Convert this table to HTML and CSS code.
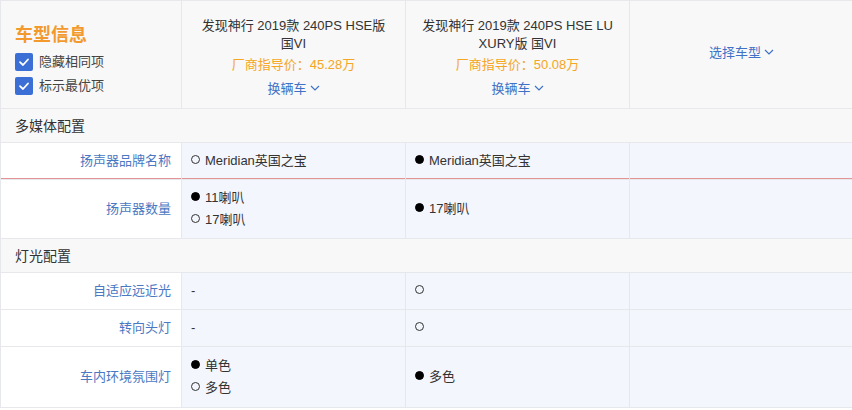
FILE: index.html
```html
<!DOCTYPE html>
<html lang="zh-CN">
<head>
    <meta charset="UTF-8">
    <title>车型对比 - 参数配置</title>
    <link rel="stylesheet" href="styles.css">
</head>
<body>

<table class="compare">
    <colgroup>
        <col class="col-label">
        <col class="col-car">
        <col class="col-car">
        <col class="col-car">
    </colgroup>

    <!-- 头部：车型信息 -->
    <tr class="head-row">
        <td class="head-info">
            <h2>车型信息</h2>
            <label class="check"><span class="box"><svg viewBox="0 0 18 18" width="18" height="18"><path d="M5 9.2 L8 12 L13 6.5" fill="none" stroke="#fff" stroke-width="1.8" stroke-linecap="round" stroke-linejoin="round"/></svg></span>隐藏相同项</label>
            <label class="check"><span class="box"><svg viewBox="0 0 18 18" width="18" height="18"><path d="M5 9.2 L8 12 L13 6.5" fill="none" stroke="#fff" stroke-width="1.8" stroke-linecap="round" stroke-linejoin="round"/></svg></span>标示最优项</label>
        </td>
        <td class="head-car">
            <div class="car-name">发现神行 2019款 240PS HSE版 国VI</div>
            <div class="car-price">厂商指导价：45.28万</div>
            <div class="switch-wrap"><a class="switch" href="#">换辆车<svg class="arrow" viewBox="0 0 10 6" width="10" height="6"><path d="M1 1 L5 5 L9 1" fill="none" stroke="#3f72c6" stroke-width="1.2"/></svg></a></div>
        </td>
        <td class="head-car">
            <div class="car-name">发现神行 2019款 240PS HSE LUXURY版 国VI</div>
            <div class="car-price">厂商指导价：50.08万</div>
            <div class="switch-wrap"><a class="switch" href="#">换辆车<svg class="arrow" viewBox="0 0 10 6" width="10" height="6"><path d="M1 1 L5 5 L9 1" fill="none" stroke="#3f72c6" stroke-width="1.2"/></svg></a></div>
        </td>
        <td class="head-pick">
            <a class="switch" href="#">选择车型<svg class="arrow" viewBox="0 0 10 6" width="10" height="6"><path d="M1 1 L5 5 L9 1" fill="none" stroke="#3f72c6" stroke-width="1.2"/></svg></a>
        </td>
    </tr>

    <!-- 多媒体配置 -->
    <tr class="section-row">
        <td colspan="4">多媒体配置</td>
    </tr>
    <tr class="row row-active">
        <td class="label">扬声器品牌名称</td>
        <td class="val"><div class="opt"><i class="dot"></i>Meridian英国之宝</div></td>
        <td class="val"><div class="opt"><i class="dot full"></i>Meridian英国之宝</div></td>
        <td class="val"></td>
    </tr>
    <tr class="row">
        <td class="label">扬声器数量</td>
        <td class="val">
            <div class="opt"><i class="dot full"></i>11喇叭</div>
            <div class="opt"><i class="dot"></i>17喇叭</div>
        </td>
        <td class="val"><div class="opt"><i class="dot full"></i>17喇叭</div></td>
        <td class="val"></td>
    </tr>

    <!-- 灯光配置 -->
    <tr class="section-row">
        <td colspan="4">灯光配置</td>
    </tr>
    <tr class="row">
        <td class="label">自适应远近光</td>
        <td class="val">-</td>
        <td class="val"><div class="opt"><i class="dot"></i></div></td>
        <td class="val"></td>
    </tr>
    <tr class="row">
        <td class="label">转向头灯</td>
        <td class="val">-</td>
        <td class="val"><div class="opt"><i class="dot"></i></div></td>
        <td class="val"></td>
    </tr>
    <tr class="row row-tall">
        <td class="label">车内环境氛围灯</td>
        <td class="val">
            <div class="opt"><i class="dot full"></i>单色</div>
            <div class="opt"><i class="dot"></i>多色</div>
        </td>
        <td class="val"><div class="opt"><i class="dot full"></i>多色</div></td>
        <td class="val"></td>
    </tr>
</table>

</body>
</html>
```

FILE: styles.css
```css
body {
    margin: 0;
    font-family: "Liberation Sans", "Noto Sans CJK SC", sans-serif;
    font-size: 13px;
    line-height: 18px;
    color: #333;
    background-color: #fff;
}

.compare {
    width: 852px;
    table-layout: fixed;
    border-collapse: collapse;
    border-top: 1px solid #d5dbe4;
}

.col-label {
    width: 181px;
}

.col-car {
    width: 224px;
}

.compare td {
    border: 1px solid #e6e8ec;
    padding: 0;
}

/* 头部 */
.head-row {
    height: 108px;
}

.head-row td {
    background-color: #f8f8f8;
    vertical-align: top;
}

.compare .head-info {
    padding-left: 14px;
}

.head-info h2 {
    margin: 23px 0 4px 0;
    font-size: 18px;
    line-height: 22px;
    font-weight: bold;
    color: #f39a2e;
}

.check {
    display: flex;
    align-items: center;
    height: 24px;
    color: #444;
}

.box {
    display: inline-block;
    width: 18px;
    height: 18px;
    background-color: #3b6fd6;
    border-radius: 2px;
    margin-right: 6px;
}

.box svg {
    display: block;
}

.compare .head-car {
    text-align: center;
    padding: 16px 14px 0 14px;
    word-break: break-all;
}

.car-name {
    color: #333;
}

.car-price {
    margin-top: 3px;
    color: #f5a623;
}

.switch-wrap {
    margin-top: 6px;
}

.switch {
    color: #3f72c6;
    text-decoration: none;
}

.arrow {
    margin-left: 3px;
    vertical-align: 2px;
}

.compare .head-pick {
    text-align: center;
    vertical-align: middle;
    padding-bottom: 4px;
}

/* 分组标题 */
.section-row {
    height: 34px;
}

.compare .section-row td {
    background-color: #f8f8f8;
    padding-left: 14px;
    font-size: 14px;
    color: #333;
}

/* 参数行 */
.row {
    height: 37px;
}

.compare .row td {
    padding-top: 7px;
    padding-bottom: 7px;
}

.compare .row-tall td {
    padding-top: 8px;
    padding-bottom: 8px;
}

.compare .row .label {
    background-color: #fff;
    text-align: right;
    padding-right: 10px;
    color: #4a78c2;
}

.compare .row .val {
    background-color: #f3f6fd;
    padding-left: 9px;
    color: #333;
}

/* 鼠标悬停行的红色下划线 */
.compare .row-active td {
    box-shadow: inset 0 -1px 0 #e39595;
}

.opt {
    line-height: 22px;
    display: flex;
    align-items: center;
}

.dot {
    display: inline-block;
    box-sizing: border-box;
    width: 9px;
    height: 9px;
    border: 1px solid #333;
    border-radius: 50%;
    margin-right: 5px;
    position: relative;
    top: -2px;
}

.dot.full {
    background-color: #000;
    border-color: #000;
}
```
